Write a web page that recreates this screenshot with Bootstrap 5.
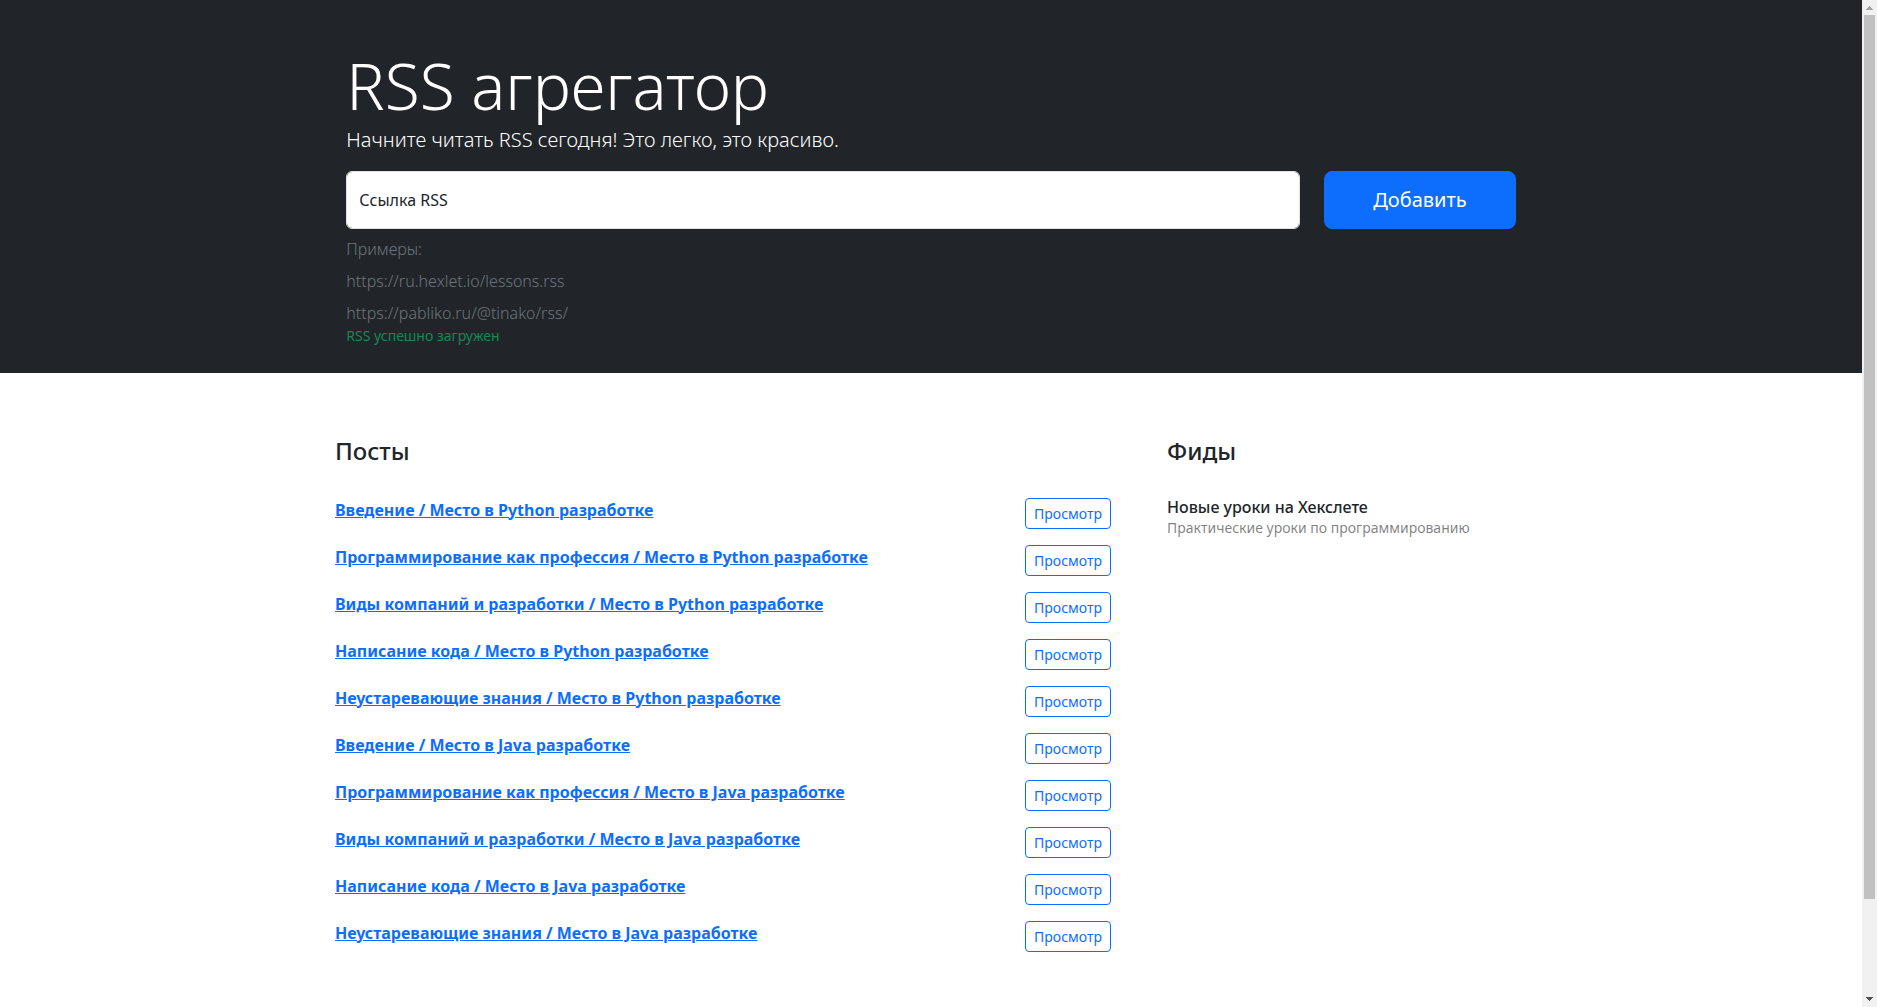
<!DOCTYPE html>
<html lang="ru">
<head>
<meta charset="utf-8">
<meta name="viewport" content="width=device-width, initial-scale=1">
<title>RSS агрегатор</title>
<link href="https://cdn.jsdelivr.net/npm/bootstrap@5.3.0/dist/css/bootstrap.min.css" rel="stylesheet">
<style>
  body { font-family: "Noto Sans", "Liberation Sans", Arial, sans-serif; }
  .hero { padding-bottom: 27px; }
  .example { color: #6c757d; font-weight: 300; }
  .scroll-rail { flex: 0 0 15px; background: #f1f1f1; }
  .scroll-rail svg { display: block; width: 15px; height: 15px; }
  .scroll-thumb { height: 90.5%; margin: 0 2px; background: #c1c1c1; }
</style>
</head>
<body class="d-flex vh-100 overflow-hidden">
  <main class="flex-grow-1 overflow-hidden">
    <section class="container-fluid bg-dark px-5 pt-5 hero">
      <div class="row">
        <div class="col-md-10 col-lg-8 mx-auto text-white">
          <h1 class="display-3 mb-0">RSS агрегатор</h1>
          <p class="lead">Начните читать RSS сегодня! Это легко, это красиво.</p>
          <form class="text-body">
            <div class="row">
              <div class="col">
                <div class="form-floating">
                  <input id="url-input" class="form-control w-100" type="text" name="url" placeholder="Ссылка RSS" autocomplete="off">
                  <label for="url-input">Ссылка RSS</label>
                </div>
              </div>
              <div class="col-auto">
                <button type="submit" class="h-100 btn btn-lg btn-primary px-sm-5">Добавить</button>
              </div>
            </div>
          </form>
          <p class="mt-2 mb-0 example">Примеры:</p>
          <p class="mt-2 mb-0 example">https://ru.hexlet.io/lessons.rss</p>
          <p class="mt-2 mb-0 example">https://pabliko.ru/@tinako/rss/</p>
          <p class="m-0 small text-success">RSS успешно загружен</p>
        </div>
      </div>
    </section>

    <section class="container-fluid container-xxl p-5">
      <div class="row">
        <div class="col-lg-8">
          <div class="card border-0">
            <div class="card-body"><h2 class="card-title h4">Посты</h2></div>
            <ul class="list-group border-0 rounded-0">
              <li class="list-group-item d-flex justify-content-between align-items-start border-0"><a href="#" class="fw-bold">Введение / Место в Python разработке</a><button type="button" class="btn btn-outline-primary btn-sm">Просмотр</button></li>
              <li class="list-group-item d-flex justify-content-between align-items-start border-0"><a href="#" class="fw-bold">Программирование как профессия / Место в Python разработке</a><button type="button" class="btn btn-outline-primary btn-sm">Просмотр</button></li>
              <li class="list-group-item d-flex justify-content-between align-items-start border-0"><a href="#" class="fw-bold">Виды компаний и разработки / Место в Python разработке</a><button type="button" class="btn btn-outline-primary btn-sm">Просмотр</button></li>
              <li class="list-group-item d-flex justify-content-between align-items-start border-0"><a href="#" class="fw-bold">Написание кода / Место в Python разработке</a><button type="button" class="btn btn-outline-primary btn-sm">Просмотр</button></li>
              <li class="list-group-item d-flex justify-content-between align-items-start border-0"><a href="#" class="fw-bold">Неустаревающие знания / Место в Python разработке</a><button type="button" class="btn btn-outline-primary btn-sm">Просмотр</button></li>
              <li class="list-group-item d-flex justify-content-between align-items-start border-0"><a href="#" class="fw-bold">Введение / Место в Java разработке</a><button type="button" class="btn btn-outline-primary btn-sm">Просмотр</button></li>
              <li class="list-group-item d-flex justify-content-between align-items-start border-0"><a href="#" class="fw-bold">Программирование как профессия / Место в Java разработке</a><button type="button" class="btn btn-outline-primary btn-sm">Просмотр</button></li>
              <li class="list-group-item d-flex justify-content-between align-items-start border-0"><a href="#" class="fw-bold">Виды компаний и разработки / Место в Java разработке</a><button type="button" class="btn btn-outline-primary btn-sm">Просмотр</button></li>
              <li class="list-group-item d-flex justify-content-between align-items-start border-0"><a href="#" class="fw-bold">Написание кода / Место в Java разработке</a><button type="button" class="btn btn-outline-primary btn-sm">Просмотр</button></li>
              <li class="list-group-item d-flex justify-content-between align-items-start border-0"><a href="#" class="fw-bold">Неустаревающие знания / Место в Java разработке</a><button type="button" class="btn btn-outline-primary btn-sm">Просмотр</button></li>
            </ul>
          </div>
        </div>
        <div class="col-lg-4">
          <div class="card border-0">
            <div class="card-body"><h2 class="card-title h4">Фиды</h2></div>
            <ul class="list-group border-0 rounded-0">
              <li class="list-group-item border-0">
                <h3 class="h6 m-0">Новые уроки на Хекслете</h3>
                <p class="m-0 small text-black-50">Практические уроки по программированию</p>
              </li>
            </ul>
          </div>
        </div>
      </div>
    </section>
  </main>

  <div class="scroll-rail d-flex flex-column" aria-hidden="true">
    <svg viewBox="0 0 15 15" shape-rendering="crispEdges"><path fill="#a3a3a3" d="M7 6h1v1h1v1h1v1h1v1H4V9h1V8h1V7h1z"/></svg>
    <div class="flex-grow-1"><div class="scroll-thumb"></div></div>
    <svg viewBox="0 0 15 15" shape-rendering="crispEdges"><path fill="#505050" d="M4 5h7v1h-1v1H9v1H8v1H7V8H6V7H5V6H4z"/></svg>
  </div>
<script src="https://cdn.jsdelivr.net/npm/bootstrap@5.3.0/dist/js/bootstrap.bundle.min.js"></script>
</body>
</html>
